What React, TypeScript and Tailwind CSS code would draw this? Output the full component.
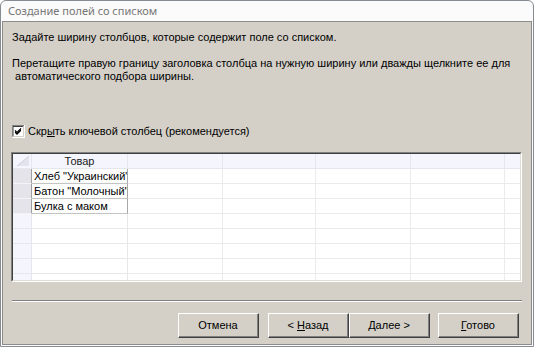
import React from "react";

const cols = [19, 96, 95, 93, 95, 94];
const items = ['Хлеб "Украинский"', 'Батон "Молочный"', "Булка с маком"];

function Row({ idx }: { idx: number }) {
  const text = items[idx];
  const hasData = text !== undefined;
  return (
    <div className="flex h-[15px] shrink-0">
      <div
        className={`w-[19px] shrink-0 border-b border-r ${
          hasData ? "bg-[#e4e4ea] border-b-[#f4f4f8] border-r-[#a0a0a0]" : "bg-[#f4f5fd] border-b-[#e6e6ee] border-r-[#e6e6ee]"
        }`}
      />
      <div
        className={`w-[96px] shrink-0 border-b border-r overflow-hidden whitespace-nowrap pl-[2px] leading-[14px] ${
          hasData ? "border-b-[#c4c4c4] border-r-[#a8a8a8]" : "border-b-[#e8e8e8] border-r-[#e8e8e8]"
        }`}
      >
        {text}
      </div>
      {cols.slice(2).map((w, i) => (
        <div key={i} style={{ width: w }} className="shrink-0 border-b border-r border-[#ebebeb]" />
      ))}
      <div className="flex-1 border-b border-[#ebebeb]" />
    </div>
  );
}

function Btn({ children }: { children: React.ReactNode }) {
  return (
    <button className="w-[81px] h-[25px] border border-t-white border-l-white border-r-[#404040] border-b-[#404040] bg-[#d4d0c8]">
      <div className="h-full flex items-center justify-center border-r border-b border-[#808080] pt-[1px]">
        <span className="whitespace-pre">{children}</span>
      </div>
    </button>
  );
}

export default function App() {
  return (
    <div className="w-[534px] h-[347px] flex flex-col border border-[#878b92] rounded-t-[6px] bg-[#fbfbfb] font-['Liberation_Sans',sans-serif] text-black">
      <div className="h-[20px] shrink-0 pl-[7px] flex items-center text-[11px] text-[#767676] font-['Noto_Sans',sans-serif]">
        Создание полей со списком
      </div>
      <div className="flex-1 mx-[1px] mb-[1px] border border-[#8c8c8c] bg-[#d4d0c8] flex flex-col pl-[8px] pr-[9px] text-[11px] leading-[13px]">
        <p className="mt-[9px] pl-[1px]">Задайте ширину столбцов, которые содержит поле со списком.</p>
        <p className="mt-[13px] pl-[1px] whitespace-nowrap">
          Перетащите правую границу заголовка столбца на нужную ширину или дважды щелкните ее для
          <br />
          &nbsp;автоматического подбора ширины.
        </p>

        <div className="mt-[42px] pl-[1px] flex items-center gap-[3px] h-[13px]">
          <svg width="13" height="13" viewBox="0 0 13 13">
            <rect x="0" y="0" width="13" height="13" fill="#ffffff" />
            <path d="M0 12.5V0.5H12.5" stroke="#808080" fill="none" />
            <path d="M1 11.5V1.5H11.5" stroke="#404040" fill="none" />
            <path d="M0.5 12.5H12.5V0" stroke="#ffffff" fill="none" />
            <path d="M1.5 11.5H11.5V1" stroke="#d4d0c8" fill="none" />
            <path d="M3 6l2 2 4-4v2l-4 4-2-2z" fill="#000" />
            <path d="M3 5.5l2 2 4-4" stroke="#000" strokeWidth="1.2" fill="none" />
          </svg>
          <span>
            Скр<span className="underline">ы</span>ть ключевой столбец (рекомендуется)
          </span>
        </div>

        <div className="mt-[14px] h-[130px] shrink-0 border border-t-[#808080] border-l-[#808080] border-r-white border-b-white">
          <div className="h-full border border-t-[#404040] border-l-[#404040] border-r-[#e0ddd6] border-b-[#e0ddd6] bg-white overflow-hidden flex flex-col">
            <div className="flex h-[15px] shrink-0 bg-[#f4f5fd]">
              <div className="w-[19px] shrink-0 border-b border-r border-[#e6e6ee] relative">
                <svg width="18" height="14" viewBox="0 0 18 14" className="absolute left-0 top-0">
                  <polygon points="4,12 16,2 16,12" fill="#e2e3ec" />
                  <line x1="4" y1="12" x2="16" y2="2" stroke="#c8c9d2" strokeWidth="0.8" />
                </svg>
              </div>
              <div className="w-[96px] shrink-0 border-b border-r border-[#e6e6ee] text-center leading-[14px] text-[#1a1a1a]">
                Товар
              </div>
              {cols.slice(2).map((w, i) => (
                <div key={i} style={{ width: w }} className="shrink-0 border-b border-r border-[#e6e6ee]" />
              ))}
              <div className="flex-1 border-b border-[#e6e6ee]" />
            </div>
            {Array.from({ length: 8 }).map((_, i) => (
              <Row key={i} idx={i} />
            ))}
          </div>
        </div>

        <div className="mt-[18px] ml-[1px] h-[2px] shrink-0 border-t border-t-[#808080] border-b border-b-white" />

        <div className="mt-[11px] flex justify-end pr-[3px]">
          <Btn>Отмена</Btn>
          <div className="ml-[9px] flex">
            <Btn>
              {"< "}
              <span className="underline">Н</span>азад
            </Btn>
            <Btn>
              <span className="underline">Д</span>
              {"алее >"}
            </Btn>
          </div>
          <div className="ml-[8px]">
            <Btn>
              <span className="underline">Г</span>отово
            </Btn>
          </div>
        </div>
      </div>
    </div>
  );
}
